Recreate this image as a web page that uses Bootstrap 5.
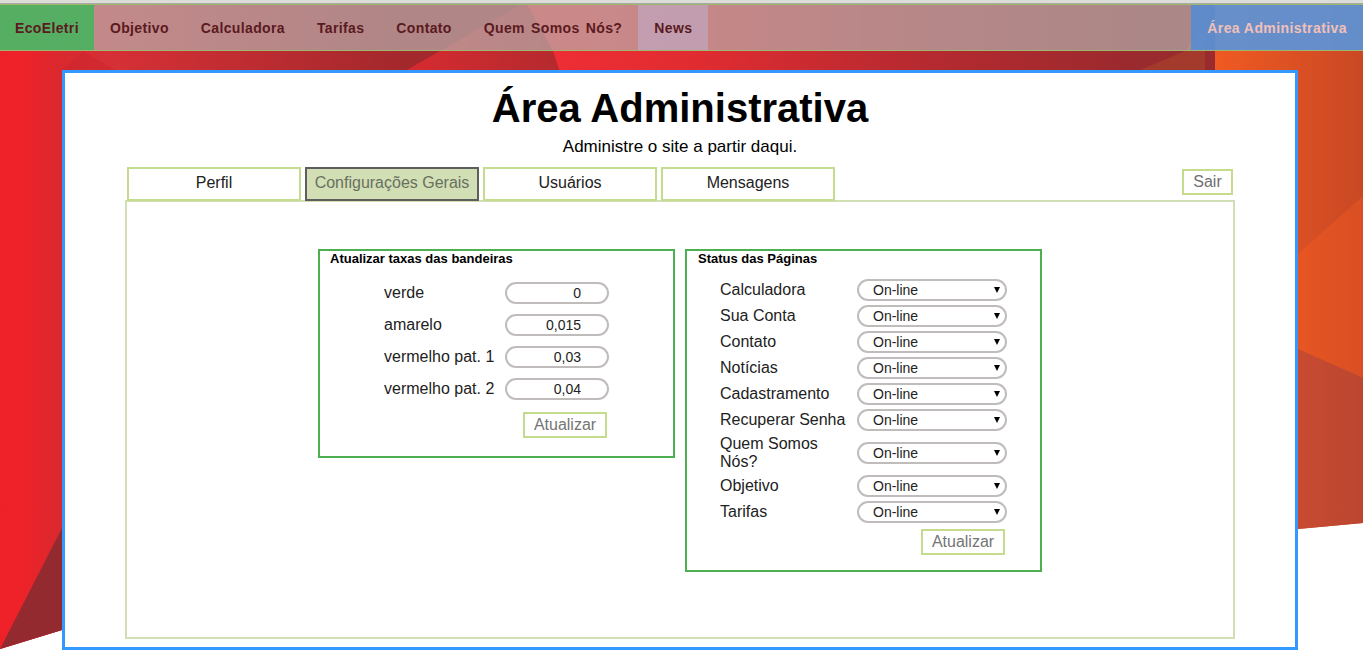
<!DOCTYPE html>
<html lang="pt-BR">
<head>
<meta charset="utf-8">
<title>Área Administrativa</title>
<link href="https://cdn.jsdelivr.net/npm/bootstrap@5.3.0/dist/css/bootstrap.min.css" rel="stylesheet">
<style>
html,body{height:657px;overflow:hidden}
body{background:#fff;font-family:"Liberation Sans",Arial,sans-serif;font-size:16px;color:#000;position:relative}
.bg-art{position:absolute;left:0;top:0;z-index:-1}
.top-strip{height:4px;background:#dcdcd9;border-bottom:1px solid #a9aaa6}
.eco-nav{height:47px;padding:0;background:rgba(183,188,186,.64);border-top:1px solid #9fb76c;border-bottom:1px solid #9fb76c;align-items:stretch;flex-wrap:nowrap}
.eco-link{display:flex;align-items:center;padding:2px 16px 0;font-size:14px;font-weight:700;letter-spacing:.36px;color:#5a1a20;text-decoration:none}
.eco-brand{background:rgba(76,178,96,.93);padding-left:15px;padding-right:15px}
.eco-wide{word-spacing:2px}
.eco-news{background:rgba(190,180,215,.5)}
.eco-admin{background:rgba(70,140,225,.75);color:#f1c0b8;margin-left:auto;letter-spacing:.42px}
.panel-main{width:1236px;height:580px;margin:19px 0 0 62px;border:3px solid #3399ff;background:#fff}
.panel-title{font-size:40px;font-weight:700;line-height:46px;margin:12px 0 0;text-align:center}
.panel-sub{font-size:17px;line-height:18px;margin:7px 0 0;text-align:center}
.tab-row{margin:11px 62px 0;height:34px;position:relative;z-index:1}
.tab-item{width:174px;height:34px;padding-bottom:2px;border:2px solid #c5dc8f;background:#fff;color:#222;display:flex;align-items:center;justify-content:center;text-decoration:none}
.tab-active{background:#d2dfb5;border-color:#5e5e5e;color:#687060}
.exit-btn{width:51px;height:26px;margin:2px 0 0 auto;border:2px solid #c5dc8f;color:#6f6f6f;display:flex;align-items:center;justify-content:center;text-decoration:none}
.content-box{margin:-1px 60px 0;height:439px;border:2px solid #d2dfb5;padding-top:47px;padding-left:191px}
.sub-box{width:357px;border:2px solid #4caf50;padding:0 10px}
.box-left{height:209px}
.box-right{height:323px;margin-left:10px;padding-left:11px}
.box-head{font-size:13px;font-weight:700;line-height:15px;margin:0}
.rate-list{padding:11px 0 0 54px}
.rate-row{height:32px;display:flex;align-items:center}
.rate-label{width:121px;line-height:18px;color:#222}
.rate-input.form-control{width:104px;height:22px;min-height:0;padding:0 26px 0 4px;border:2px solid #c0bcbc;border-radius:11px;font-size:14px;line-height:18px;text-align:right;color:#222;box-shadow:none}
.go-btn{width:84px;height:26px;padding:0;border:2px solid #c5dc8f;border-radius:0;background:#fff;color:#757575;font-size:16px;line-height:20px}
.go-left{display:block;margin:7px 0 0 139px}
.status-list{padding:11px 0 0 22px}
.status-row{display:flex;align-items:center;padding:2px 0}
.status-label{width:137px;line-height:18px;color:#222;padding-right:4px}
.status-select.form-select{width:150px;height:22px;min-height:0;padding:0 20px 0 14px;border:2px solid #c0bcbc;border-radius:11px;font-size:14px;line-height:18px;color:#222;background-color:#fff;background-size:6px 6px;background-position:right 5px center;box-shadow:none;background-image:url("data:image/svg+xml,%3Csvg xmlns='http://www.w3.org/2000/svg' viewBox='0 0 6 6'%3E%3Cpath d='M0 0h6L3 6z' fill='%23000'/%3E%3C/svg%3E")}
.go-right{display:block;margin:4px 0 0 201px}
</style>
</head>
<body>
<svg class="bg-art" width="1363" height="657" viewBox="0 0 1363 657" aria-hidden="true">
<defs>
<linearGradient id="redA" gradientUnits="userSpaceOnUse" x1="0" y1="0" x2="440" y2="0">
<stop offset="0" stop-color="#ef2128"/><stop offset=".05" stop-color="#ee2229"/><stop offset=".14" stop-color="#d9292f"/><stop offset=".25" stop-color="#d63036"/><stop offset=".92" stop-color="#a3282c"/><stop offset="1" stop-color="#a3282c"/>
</linearGradient>
<linearGradient id="redB" gradientUnits="userSpaceOnUse" x1="407" y1="0" x2="560" y2="0">
<stop offset="0" stop-color="#d62b30"/><stop offset="1" stop-color="#b42a2e"/>
</linearGradient>
<linearGradient id="redC" gradientUnits="userSpaceOnUse" x1="525" y1="0" x2="1215" y2="0">
<stop offset=".04" stop-color="#ee2e34"/><stop offset=".25" stop-color="#e02c31"/><stop offset=".55" stop-color="#b82a30"/><stop offset=".9" stop-color="#992a2d"/><stop offset="1" stop-color="#992a2d"/>
</linearGradient>
<linearGradient id="orangeBand" gradientUnits="userSpaceOnUse" x1="1215" y1="0" x2="1363" y2="0">
<stop offset="0" stop-color="#f05a22"/><stop offset="1" stop-color="#c94824"/>
</linearGradient>
<linearGradient id="orangeMid" gradientUnits="userSpaceOnUse" x1="1298" y1="0" x2="1363" y2="0">
<stop offset="0" stop-color="#e75522"/><stop offset="1" stop-color="#d94f23"/>
</linearGradient>
<linearGradient id="orangeLow" gradientUnits="userSpaceOnUse" x1="1298" y1="0" x2="1363" y2="0">
<stop offset="0" stop-color="#c84b31"/><stop offset="1" stop-color="#bb4630"/>
</linearGradient>
</defs>
<polygon points="0,0 600,0 600,300 0,649" fill="url(#redA)"/>
<polygon points="525,0 1216,0 1216,536 62,630 0,649 0,600 560,72" fill="url(#redC)"/>
<polygon points="522,4 527,4 553,51 560,72 400,74 440,51" fill="url(#redB)"/>
<polygon points="0,100 62,100 62,630 0,649" fill="url(#redA)"/>
<polygon points="1215,0 1363,0 1363,523 1298,529 1215,536" fill="url(#orangeBand)"/>
<polygon points="1298,254 1363,196 1363,378 1298,349" fill="url(#orangeMid)"/>
<polygon points="1298,349 1363,378 1363,523 1298,529" fill="url(#orangeLow)"/>
<polygon points="1140,70 1185,51 1205,20 1205,70" fill="#a33a2c"/>
<polygon points="62,528 62,630 0,649" fill="#922a30"/>
<polygon points="83,51 115,70 62,70" fill="#c9242a" opacity=".4"/>
</svg>

<div class="top-strip"></div>
<nav class="eco-nav d-flex">
  <a class="eco-link eco-brand" href="#">EcoEletri</a>
  <a class="eco-link" href="#">Objetivo</a>
  <a class="eco-link" href="#">Calculadora</a>
  <a class="eco-link" href="#">Tarifas</a>
  <a class="eco-link" href="#">Contato</a>
  <a class="eco-link eco-wide" href="#">Quem Somos Nós?</a>
  <a class="eco-link eco-news" href="#">News</a>
  <a class="eco-link eco-admin" href="#">Área Administrativa</a>
</nav>

<main class="panel-main">
  <h1 class="panel-title">Área Administrativa</h1>
  <p class="panel-sub">Administre o site a partir daqui.</p>
  <div class="tab-row d-flex gap-1">
    <a class="tab-item" href="#">Perfil</a>
    <a class="tab-item tab-active" href="#">Configurações Gerais</a>
    <a class="tab-item" href="#">Usuários</a>
    <a class="tab-item" href="#">Mensagens</a>
    <a class="exit-btn" href="#">Sair</a>
  </div>
  <div class="content-box d-flex align-items-start">
    <section class="sub-box box-left">
      <h2 class="box-head">Atualizar taxas das bandeiras</h2>
      <div class="rate-list">
        <div class="rate-row"><span class="rate-label">verde</span><input class="form-control rate-input" value="0"></div>
        <div class="rate-row"><span class="rate-label">amarelo</span><input class="form-control rate-input" value="0,015"></div>
        <div class="rate-row"><span class="rate-label">vermelho pat. 1</span><input class="form-control rate-input" value="0,03"></div>
        <div class="rate-row"><span class="rate-label">vermelho pat. 2</span><input class="form-control rate-input" value="0,04"></div>
        <button class="btn go-btn go-left" type="button">Atualizar</button>
      </div>
    </section>
    <section class="sub-box box-right">
      <h2 class="box-head">Status das Páginas</h2>
      <div class="status-list">
        <div class="status-row"><span class="status-label">Calculadora</span><select class="form-select status-select"><option>On-line</option><option>Off-line</option></select></div>
        <div class="status-row"><span class="status-label">Sua Conta</span><select class="form-select status-select"><option>On-line</option><option>Off-line</option></select></div>
        <div class="status-row"><span class="status-label">Contato</span><select class="form-select status-select"><option>On-line</option><option>Off-line</option></select></div>
        <div class="status-row"><span class="status-label">Notícias</span><select class="form-select status-select"><option>On-line</option><option>Off-line</option></select></div>
        <div class="status-row"><span class="status-label">Cadastramento</span><select class="form-select status-select"><option>On-line</option><option>Off-line</option></select></div>
        <div class="status-row"><span class="status-label">Recuperar Senha</span><select class="form-select status-select"><option>On-line</option><option>Off-line</option></select></div>
        <div class="status-row"><span class="status-label">Quem Somos Nós?</span><select class="form-select status-select"><option>On-line</option><option>Off-line</option></select></div>
        <div class="status-row"><span class="status-label">Objetivo</span><select class="form-select status-select"><option>On-line</option><option>Off-line</option></select></div>
        <div class="status-row"><span class="status-label">Tarifas</span><select class="form-select status-select"><option>On-line</option><option>Off-line</option></select></div>
        <button class="btn go-btn go-right" type="button">Atualizar</button>
      </div>
    </section>
  </div>
</main>
<script src="https://cdn.jsdelivr.net/npm/bootstrap@5.3.0/dist/js/bootstrap.bundle.min.js"></script>
</body>
</html>
